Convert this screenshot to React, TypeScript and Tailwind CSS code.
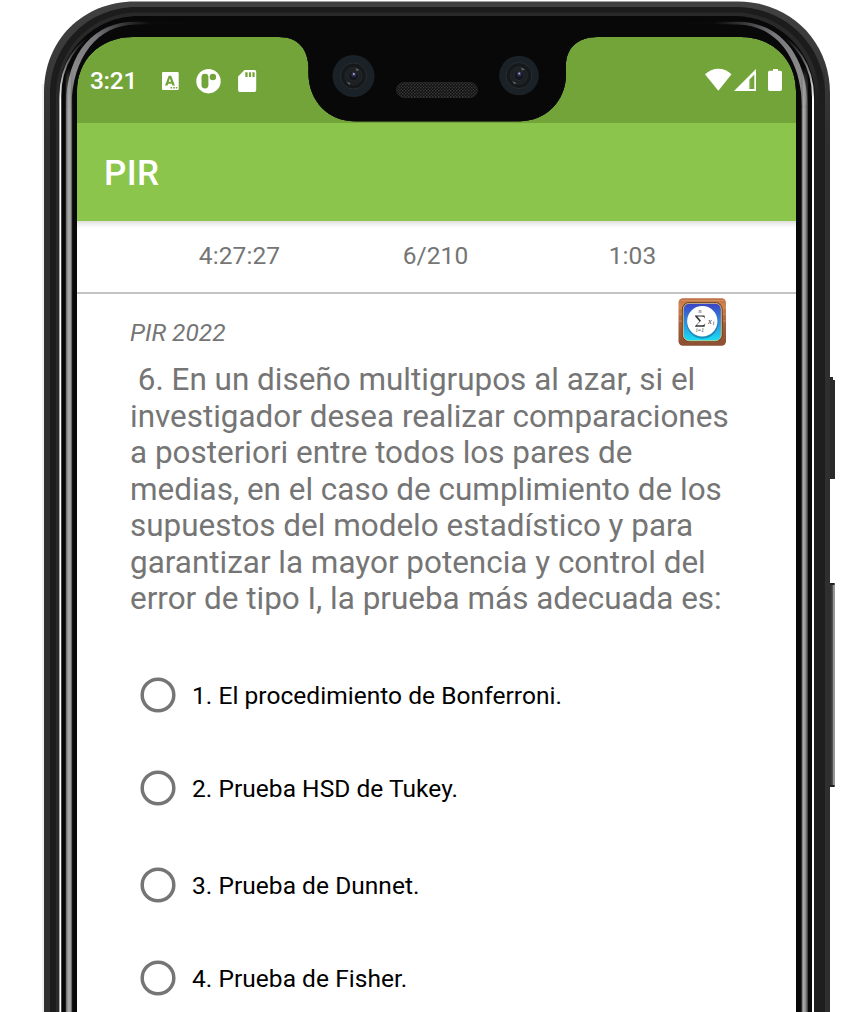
import React from "react";

const options = [
  { label: "1. El procedimiento de Bonferroni.", row: "h-[93px]" },
  { label: "2. Prueba HSD de Tukey.", row: "h-[97px]" },
  { label: "3. Prueba de Dunnet.", row: "h-[93px]" },
  { label: "4. Prueba de Fisher.", row: "h-[85px]" },
];

const questionLines = [
  "\u00a06. En un diseño multigrupos al azar, si el",
  "investigador desea realizar comparaciones",
  "a posteriori entre todos los pares de",
  "medias, en el caso de cumplimiento de los",
  "supuestos del modelo estadístico y para",
  "garantizar la mayor potencia y control del",
  "error de tipo I, la prueba más adecuada es:",
];

function NotificationIcons() {
  return (
    <svg width="97" height="26" viewBox="161 67 97 26" fill="#fff">
      <path fillRule="evenodd" d="M163 71h14.500a1.200 1.200 0 0 1 1.200 1.200v15.600a1.200 1.200 0 0 1-1.200 1.200H163a1 1 0 0 1-1-1V72a1 1 0 0 1 1-1zM168.700 74.800l-3.700 9.800h2.500l.6-1.800h3.700l.6 1.800h2.500L171.200 74.800zm1.200 2.500 1.100 3.500h-2.200zM170.500 86v1.500h1.600V86zm2.700 0v1.500h1.600V86zm2.600 0v1.500h1.500V86z" />
      <path fillRule="evenodd" d="M208.500 68a12.200 12.200 0 1 1 0 24.400 12.200 12.200 0 0 1 0-24.400zm-3.600 4.700a3.400 3.400 0 0 0-3.400 3.400v8a3.400 3.400 0 0 0 6.900 0v-8a3.400 3.400 0 0 0-3.500-3.400zm8 .1a3.200 3.200 0 1 0 0 6.400 3.200 3.200 0 0 0 0-6.400z" />
      <path fillRule="evenodd" d="M244.500 69h10a1.700 1.700 0 0 1 1.700 1.700v18.600a1.700 1.700 0 0 1-1.700 1.700h-14.700a1.700 1.700 0 0 1-1.700-1.700V75.500zm.8 2.300v4.700h2.300v-4.700zm3.600 0v4.700h2.200v-4.700zm3.500 0v4.700h2.200v-4.700z" />
    </svg>
  );
}

function SystemIcons() {
  return (
    <svg width="78" height="24" viewBox="705 68 78 24" fill="#fff">
      <path d="M705 74.300c3.900-3.700 8.400-5.600 13.400-5.600s9.500 1.900 13.100 5.600L718.300 90.700z" />
      <path fillRule="evenodd" d="M756 69v22h-22zM754.300 74.500l-5.200 5.500V89h5.200z" />
      <path d="M749 80h1.200v8.500H749z" opacity=".35" />
      <path d="M773 69h5v1.800h2.300q1.700 0 1.700 1.700v16.700q0 1.800-1.800 1.800h-10.400q-1.800 0-1.800-1.800V72.500q0-1.700 1.700-1.700h3.300z" />
    </svg>
  );
}

function FormulaIcon() {
  return (
    <svg width="49" height="50" viewBox="0 0 49 50">
      <defs>
        <linearGradient id="wood" x2="0" y2="1">
          <stop stopColor="#b96f43" />
          <stop offset=".15" stopColor="#cf8450" />
          <stop offset=".5" stopColor="#a8623c" />
          <stop offset="1" stopColor="#8c4f32" />
        </linearGradient>
        <linearGradient id="sky" x2="0" y2="1">
          <stop stopColor="#3d3fc0" />
          <stop offset=".45" stopColor="#2f84df" />
          <stop offset="1" stopColor="#18e3f3" />
        </linearGradient>
      </defs>
      <rect x=".5" y="1.200" width="47.500" height="47.500" rx="4.500" fill="url(#wood)" />
      <path d="M3 3.500h43M1 11h4M44 11h4M1 17h3M45 17h3M1 24h3M45 24h3" stroke="#d99663" strokeWidth="1" opacity=".8" />
      <rect x="4.500" y="5.500" width="39.500" height="39" rx="7" fill="url(#sky)" stroke="#63391f" strokeWidth="1.200" />
      <rect x="5.300" y="6.300" width="38" height="37.500" rx="6" fill="none" stroke="#e5c37c" strokeWidth=".9" />
      <circle cx="24.500" cy="26" r="15.700" fill="#17508c" opacity=".5" />
      <circle cx="24.300" cy="24.300" r="15.200" fill="#fff" />
      <path d="M17 18.500H26.500L27 21.500Q26.300 19.500 24 19.500H19.300L23 23.800 18.600 28.300H24.500Q26.500 28.300 27.300 26.300L26.500 29.800H17V29.200L21.500 24.400 17 19.200Z" fill="#333" />
      <g fill="#333" fontFamily="Liberation Serif, serif" textAnchor="middle">
        <text x="32" y="26.500" fontSize="8.500" fontStyle="italic">x</text>
        <text x="35.700" y="27.500" fontSize="6" fontStyle="italic">i</text>
        <text x="22" y="16" fontSize="6" fontStyle="italic">n</text>
        <text x="22" y="34.800" fontSize="5.500" fontStyle="italic">i=1</text>
      </g>
    </svg>
  );
}

function Camera({ x, y, r }: { x: number; y: number; r: number }) {
  return (
    <g transform={`translate(${x} ${y})`}>
      <circle r={r} fill="#1a2228" />
      <circle r="13" fill="#15191c" stroke="#292d30" strokeWidth="1" />
      <circle r="8.500" fill="#1c2022" stroke="#25292c" strokeWidth="1" />
      <circle r="5" fill="#14161d" stroke="#2b3038" strokeWidth=".7" />
      <path d="M2-8 6-6 3-5zM-7 6l3 3 1-2z" fill="#68645f" />
      <circle cx=".3" cy="-1.500" r="2.500" fill="#2c3050" />
      <circle cx=".3" cy="-2" r="1" fill="#a9afc8" />
    </g>
  );
}

function DeviceFrame() {
  return (
    <svg className="pointer-events-none absolute inset-0" width="868" height="1012" viewBox="0 0 868 1012" fill="none">
      <defs>
        <linearGradient id="metalLeft" gradientUnits="userSpaceOnUse" x1="65.500" y1="0" x2="72.500" y2="0">
          <stop stopColor="#555" />
          <stop offset=".4" stopColor="#a9a9a9" />
          <stop offset=".7" stopColor="#a0a0a0" />
          <stop offset="1" stopColor="#333" />
        </linearGradient>
        <linearGradient id="metalRight" gradientUnits="userSpaceOnUse" x1="801" y1="0" x2="808" y2="0">
          <stop stopColor="#444" />
          <stop offset=".35" stopColor="#a8a8a8" />
          <stop offset=".6" stopColor="#989898" />
          <stop offset="1" stopColor="#333" />
        </linearGradient>
        <linearGradient id="fadeLeft" gradientUnits="userSpaceOnUse" x1="75" y1="90" x2="150" y2="22">
          <stop stopColor="#8f8f8f" />
          <stop offset=".5" stopColor="#77777c" />
          <stop offset="1" stopColor="#0a0a0a" />
        </linearGradient>
        <linearGradient id="fadeRight" gradientUnits="userSpaceOnUse" x1="798" y1="90" x2="715" y2="22">
          <stop stopColor="#8f8f8f" />
          <stop offset=".5" stopColor="#77777c" />
          <stop offset="1" stopColor="#0a0a0a" />
        </linearGradient>
        <linearGradient id="reveal" gradientUnits="userSpaceOnUse" x1="0" y1="68" x2="0" y2="108">
          <stop stopColor="#fff" stopOpacity="0" />
          <stop offset="1" stopColor="#fff" />
        </linearGradient>
        <mask id="sideReveal" maskUnits="userSpaceOnUse" x="0" y="0" width="868" height="1012">
          <rect width="868" height="1012" fill="url(#reveal)" />
        </mask>
        <linearGradient id="shell" gradientUnits="userSpaceOnUse" x1="0" y1="0" x2="0" y2="140">
          <stop stopColor="#414141" />
          <stop offset="1" stopColor="#2f2f2f" />
        </linearGradient>
        <linearGradient id="rim" gradientUnits="userSpaceOnUse" x1="0" y1="38" x2="0" y2="100">
          <stop stopColor="#fff" stopOpacity="0" />
          <stop offset="1" stopColor="#fff" />
        </linearGradient>
        <linearGradient id="key" x2="1" y2="0">
          <stop stopColor="#222" />
          <stop offset=".6" stopColor="#444" />
          <stop offset=".88" stopColor="#aaa" />
          <stop offset="1" stopColor="#333" />
        </linearGradient>
        <pattern id="mesh" width="3" height="3" patternUnits="userSpaceOnUse">
          <rect width="3" height="3" fill="#101010" />
          <circle cx=".8" cy=".8" r=".75" fill="#454545" />
          <circle cx="2.300" cy="2.300" r=".75" fill="#333" />
        </pattern>
        <clipPath id="bezel">
          <path clipRule="evenodd" d="M0 0H868V1012H0ZM77 1012V91C77 61 99 37 133 37H279C299 37 308 50 308.500 67V74C309 101 328 121.300 355 121.300H519C546 121.300 566 101 566 74V65C566 49 577 37 597 37H741C774 37 796 61 796 91V1012Z" />
        </clipPath>
      </defs>
      <path d="M829 377h4v3h2v99h-6z" fill="#2a2a2a" />
      <path d="M829 583h5.500v204H829z" fill="url(#key)" />
      <path d="M829 583h5.500v2H829zM829 785h5.500v2H829z" fill="#222" />
      <g clipPath="url(#bezel)">
        <path d="M42 1012V84H45V1012Z" fill="#eff1f2" />
        <path d="M44 1012V92C44 40 83 1.500 135 1.500H738C790 1.500 830 41 830 93V1012Z" fill="url(#shell)" />
        <path d="M50 1012V94C50 45 88 7 137 7H736C786 7 825 46 825 95V1012Z" fill="#1c1c1c" />
        <path d="M56 1012V95C56 49 92 12.500 138 12.500H735C781 12.500 819 49 819 96V1012Z" fill="#292929" />
        <path d="M59 1012V96C59 51 94 16 139 16H734C779 16 815 52 815 97V1012Z" fill="#080808" />
        <path mask="url(#sideReveal)" d="M814 1012V60H825V1012Z" fill="#1e1e1e" />
        <path d="M60.300 1012V96C60.300 65 76 42 101 29" stroke="url(#rim)" strokeWidth="1.900" />
        <path d="M813 1012V97C813 66 797 42 770 28" stroke="url(#rim)" strokeWidth="2" />
        <path d="M66.200 106C66.200 50 96 21.700 135 21.700C155 21.700 175 22 195 23.500C175 24.500 155 24 135 24.500C98 25 72 57 71.500 106Z" fill="url(#fadeLeft)" />
        <path d="M807.500 106C807 50 775 21.700 738 21.700C718 21.700 700 22 680 23.500C700 24.500 718 24 738 24.500C775 25 801 57 802 106Z" fill="url(#fadeRight)" />
        <g mask="url(#sideReveal)">
          <path d="M65.700 65h6.600v947h-6.600z" fill="url(#metalLeft)" />
          <path d="M801.500 65h6.500v947h-6.500z" fill="url(#metalRight)" />
        </g>
      </g>
      <Camera x={353.500} y={76} r={21} />
      <Camera x={519} y={75.500} r={19.800} />
      <rect x="396.500" y="82.500" width="81" height="15" rx="7.500" fill="url(#mesh)" stroke="#242424" />
    </svg>
  );
}

export default function App() {
  return (
    <div className="relative h-[1012px] w-[868px] overflow-hidden bg-white font-['Roboto',sans-serif]">
      <div className="ml-[77px] flex h-full w-[719px] flex-col bg-white pt-[37px]">
        <header className="flex h-[86px] shrink-0 items-start justify-between bg-[#73a439] pt-[30px] pr-[13px] pl-[13px] text-white">
          <div className="flex items-center">
            <span className="w-[71px] text-[24.5px] leading-[28px] font-medium tracking-[-0.3px]">3:21</span>
            <NotificationIcons />
          </div>
          <div className="pt-px">
            <SystemIcons />
          </div>
        </header>
        <div className="flex h-[98px] shrink-0 items-center bg-[#8bc54c] px-[27px] pt-[5px] text-[35px] font-medium tracking-[0.4px] text-white">
          PIR
        </div>
        <div className="flex h-[73px] shrink-0 border-b-2 border-[#c4c4c4] pl-[65px] text-[24.5px] leading-[70px] tracking-[0.1px] text-[#757575] shadow-[inset_0_7px_6px_-5px_rgba(0,0,0,0.18)]">
          <span className="w-[195px] text-center">4:27:27</span>
          <span className="w-[197px] text-center">6/210</span>
          <span className="w-[197px] text-center">1:03</span>
        </div>
        <main className="flex flex-col pr-[69px] pl-[53px]">
          <div className="flex h-[68px] justify-between pt-[3px]">
            <em className="pt-[21px] text-[24.5px] leading-[30px] text-[#757575]">PIR 2022</em>
            <FormulaIcon />
          </div>
          <div className="text-[31.45px] leading-[36.5px] whitespace-nowrap text-[#757575]">
            {questionLines.map((line) => (
              <div key={line}>{line}</div>
            ))}
          </div>
          <div className="flex flex-col pt-[59px] pl-[10px]">
            {options.map((option) => (
              <label key={option.label} className={`flex items-start gap-[16px] ${option.row}`}>
                <svg className="size-[36px]" viewBox="0 0 36 36" fill="none">
                  <circle cx="18" cy="18" r="15.800" stroke="#757575" strokeWidth="3.500" />
                </svg>
                <span className="pt-px text-[24.5px] leading-[36px] tracking-[0.04px] whitespace-nowrap text-black">
                  {option.label}
                </span>
              </label>
            ))}
          </div>
        </main>
      </div>
      <DeviceFrame />
    </div>
  );
}
